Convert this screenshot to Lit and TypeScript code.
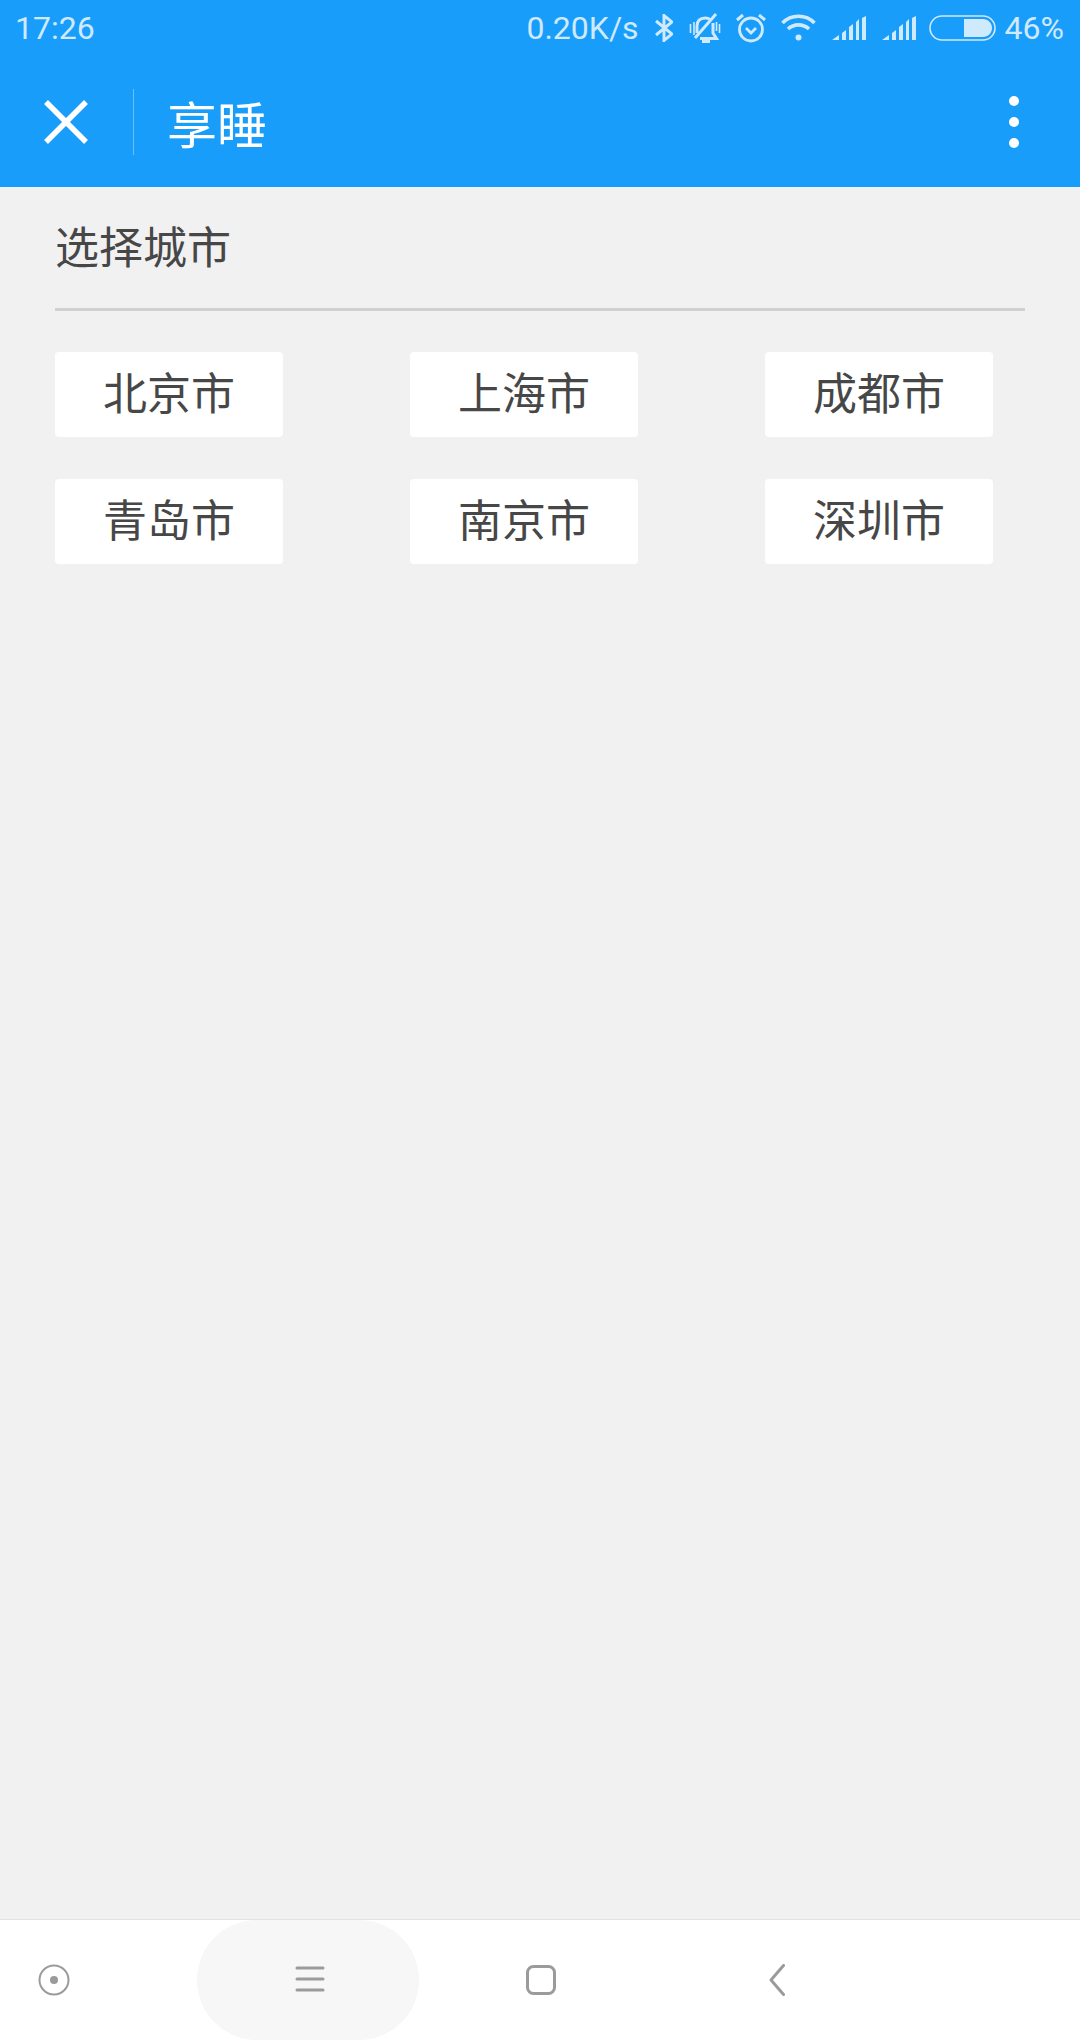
import { LitElement, html, css, svg } from 'lit';
import { customElement, state } from 'lit/decorators.js';

const CITIES = ['北京市', '上海市', '成都市', '青岛市', '南京市', '深圳市'];

// status bar icons, drawn in their own pixel size
const signalIcon = svg`<svg class="signal" width="34" height="24" viewBox="0 0 34 24" fill="currentColor">
  <path d="M0 24 L7 19 V24 Z M10 17 L14 14 V24 H10 Z M17 11 L21 8 V24 H17 Z M24 6 L27 3 V24 H24 Z M30 2 L34 0 V24 H30 Z" />
</svg>`;

@customElement('app-root')
export class AppRoot extends LitElement {
  @state() cities: string[] = CITIES;

  static styles = css`
    :host {
      display: flex;
      flex-direction: column;
      height: 2040px;
      background: #f1f1f1;
      font-family: 'Noto Sans CJK SC', 'Roboto', sans-serif;
    }

    .status-bar {
      display: flex;
      align-items: center;
      height: 56px;
      padding: 0 16px 0 15px;
      background: #199dfb;
      color: #cfe9fd;
      font-family: 'Roboto', sans-serif;
      font-size: 32px;
      font-weight: 400;
      box-sizing: border-box;
    }

    .status-bar svg {
      display: block;
      flex: none;
    }

    .clock {
      flex: 1;
    }

    .speed {
      margin-right: 16px;
    }

    .bell {
      margin-left: 16px;
    }

    .alarm {
      margin-left: 15px;
    }

    .wifi {
      margin-left: 15px;
    }

    .signal {
      margin-left: 16px;
    }

    .battery {
      margin: 0 9px 0 13px;
    }

    .toolbar {
      display: flex;
      align-items: center;
      height: 131px;
      padding: 0 0 0 44px;
      background: #199dfb;
      color: #fff;
      box-sizing: border-box;
    }

    .close {
      display: block;
      flex: none;
    }

    .toolbar-divider {
      width: 1px;
      height: 66px;
      margin: 0 33px 0 45px;
      background: rgba(255, 255, 255, 0.35);
    }

    .title {
      flex: 1;
      font-size: 50px;
      line-height: 66px;
      font-weight: 400;
    }

    .more {
      display: flex;
      flex-direction: column;
      gap: 11px;
      margin-right: 61px;
    }

    .more span {
      width: 10px;
      height: 10px;
      border-radius: 50%;
      background: #fff;
    }

    .content {
      flex: 1;
      padding: 0 55px;
    }

    .heading {
      height: 124px;
      line-height: 117px;
      font-size: 44px;
      font-weight: 400;
      color: #474747;
      border-bottom: 3px solid #d0d0d0;
      box-sizing: border-box;
      margin-bottom: 41px;
    }

    .cities {
      display: grid;
      grid-template-columns: repeat(3, 228px);
      column-gap: 127px;
      row-gap: 42px;
    }

    .city {
      height: 85px;
      line-height: 78px;
      border-radius: 4px;
      background: #fff;
      text-align: center;
      font-size: 44px;
      font-weight: 400;
      color: #474747;
    }

    .nav {
      display: flex;
      align-items: center;
      height: 120px;
      background: #fff;
      box-shadow: 0 -1px 0 #e2e2e2;
      color: #9b9b9b;
    }

    .nav svg {
      display: block;
      flex: none;
    }

    .nav-recent {
      margin: 0 0 0 38px;
    }

    .nav-menu {
      display: flex;
      align-items: center;
      justify-content: center;
      width: 222px;
      height: 120px;
      padding: 0 0 2px 3px;
      box-sizing: border-box;
      margin: 0 107px 0 127px;
      border-radius: 60px;
      background: #f7f7f7;
    }

    .nav-back {
      margin-left: 213px;
    }
  `;

  render() {
    return html`
      <div class="status-bar">
        <span class="clock">17:26</span>
        <span class="speed">0.20K/s</span>
        <svg width="18" height="28" viewBox="0 0 18 28" fill="none" stroke="currentColor" stroke-width="3">
          <path d="M1 7 L17 20 L9 26.500 V1.500 L17 8 L1 21" />
        </svg>
        <svg class="bell" width="32" height="30" viewBox="0 0 32 30" fill="none" stroke="currentColor" stroke-width="3">
          <path d="M8 20 V13 C8 8 11 5 16 5 C18 5 20 5.500 21 6.500 M24 10 V20 L27.500 25.500 H11" />
          <path d="M6 25 L27 1" />
          <path d="M13 28.500 H21" />
          <path d="M1.500 11 V20 M5 9 V22 M27.500 9 V18 M30.500 11 V20" stroke-width="1.600" />
        </svg>
        <svg class="alarm" width="30" height="30" viewBox="0 0 30 30" fill="none" stroke="currentColor" stroke-width="2.800">
          <circle cx="15" cy="16.500" r="11.500" />
          <path d="M10 15 L15 20 L20 15" />
          <path d="M1 7 L7 2 M23 2 L29 7" stroke-width="3" />
        </svg>
        <svg class="wifi" width="35" height="28" viewBox="0 0 35 28" fill="none" stroke="currentColor" stroke-width="3.600">
          <path d="M1.500 9 C10 0 25 0 33.500 9" />
          <path d="M7 15 C13 9.500 22 9.500 28 15" />
          <circle cx="17.500" cy="23.500" r="3" fill="currentColor" stroke="none" />
        </svg>
        ${signalIcon}${signalIcon}
        <svg class="battery" width="67" height="26" viewBox="0 0 67 26" fill="none">
          <rect x="1" y="1" width="65" height="24" rx="12" stroke="currentColor" stroke-width="1.600" />
          <path d="M35 4 H54 C59 4 63 8 63 13 C63 18 59 22 54 22 H35 Z" fill="currentColor" />
        </svg>
        <span>46%</span>
      </div>

      <div class="toolbar">
        <svg class="close" width="44" height="44" viewBox="0 0 44 44" stroke="#fff" stroke-width="5.500">
          <path d="M2 2 L42 42 M42 2 L2 42" />
        </svg>
        <div class="toolbar-divider"></div>
        <div class="title">享睡</div>
        <div class="more"><span></span><span></span><span></span></div>
      </div>

      <div class="content">
        <div class="heading">选择城市</div>
        <div class="cities">
          ${this.cities.map((city) => html`<div class="city">${city}</div>`)}
        </div>
      </div>

      <div class="nav">
        <svg class="nav-recent" width="32" height="32" viewBox="0 0 32 32" fill="none" stroke="currentColor" stroke-width="2">
          <circle cx="16" cy="16" r="14.500" />
          <circle cx="16" cy="16" r="4" fill="currentColor" stroke="none" />
        </svg>
        <div class="nav-menu">
          <svg width="30" height="26" viewBox="0 0 30 26" stroke="currentColor" stroke-width="3" stroke-linecap="round">
            <path d="M2 2 H28 M2 13 H28 M2 24 H28" />
          </svg>
        </div>
        <svg width="30" height="30" viewBox="0 0 30 30" fill="none" stroke="currentColor" stroke-width="3">
          <rect x="1.500" y="1.500" width="27" height="27" rx="6" />
        </svg>
        <svg class="nav-back" width="16" height="32" viewBox="0 0 16 32" fill="none" stroke="currentColor" stroke-width="3" stroke-linecap="round" stroke-linejoin="round">
          <path d="M14.500 1.500 L2 16 L14.500 30.500" />
        </svg>
      </div>
    `;
  }
}

declare global {
  interface HTMLElementTagNameMap {
    'app-root': AppRoot;
  }
}
